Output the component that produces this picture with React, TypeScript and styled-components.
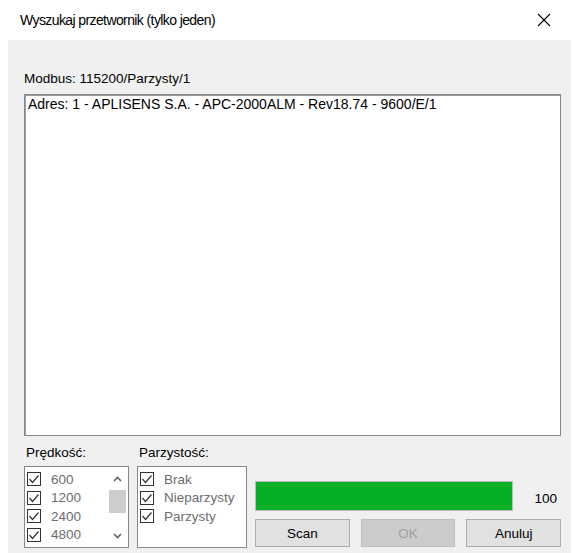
import { createGlobalStyle } from 'styled-components';
import styled from 'styled-components';

const GlobalStyle = createGlobalStyle`
  html, body {
    margin: 0;
    padding: 0;
    background: #ffffff;
  }
  body {
    font-family: 'Liberation Sans', Arial, sans-serif;
    font-size: 13px;
    color: #000000;
  }
`;

const SPEEDS = ['600', '1200', '2400', '4800'];
const PARITIES = ['Brak', 'Nieparzysty', 'Parzysty'];

export default function App() {
  return (
    <>
      <GlobalStyle />
      <Window>
        <TitleBar>
          <Title>Wyszukaj przetwornik (tylko jeden)</Title>
          <CloseButton aria-label="close">
            <svg width="14" height="14" viewBox="0 0 14 14">
              <path d="M1 1 L13 13 M13 1 L1 13" stroke="#000" strokeWidth="1.1" />
            </svg>
          </CloseButton>
        </TitleBar>

        <Body>
          <FieldLabel>Modbus: 115200/Parzysty/1</FieldLabel>
          <ResultList>
            <ResultItem>Adres: 1 - APLISENS S.A. - APC-2000ALM - Rev18.74 - 9600/E/1</ResultItem>
          </ResultList>

          <BottomRow>
            <Group $width={106}>
              <GroupLabel>Prędkość:</GroupLabel>
              <CheckList>
                <CheckItems>
                  {SPEEDS.map((s) => (
                    <CheckRow key={s}>
                      <CheckMark />
                      <span>{s}</span>
                    </CheckRow>
                  ))}
                </CheckItems>
                <ScrollBar>
                  <ScrollArrow>
                    <svg width="9" height="6" viewBox="0 0 9 6">
                      <path d="M1 5 L4.5 1.5 L8 5" fill="none" stroke="#606060" strokeWidth="1.6" />
                    </svg>
                  </ScrollArrow>
                  <ScrollTrack>
                    <ScrollThumb />
                  </ScrollTrack>
                  <ScrollArrow>
                    <svg width="9" height="6" viewBox="0 0 9 6">
                      <path d="M1 1 L4.5 4.5 L8 1" fill="none" stroke="#606060" strokeWidth="1.6" />
                    </svg>
                  </ScrollArrow>
                </ScrollBar>
              </CheckList>
            </Group>

            <Group $width={111}>
              <GroupLabel>Parzystość:</GroupLabel>
              <CheckList>
                <CheckItems>
                  {PARITIES.map((p) => (
                    <CheckRow key={p}>
                      <CheckMark />
                      <span>{p}</span>
                    </CheckRow>
                  ))}
                </CheckItems>
              </CheckList>
            </Group>

            <Controls>
              <ProgressRow>
                <ProgressBar>
                  <ProgressFill style={{ width: '100%' }} />
                </ProgressBar>
                <ProgressValue>100</ProgressValue>
              </ProgressRow>
              <ButtonRow>
                <Button>Scan</Button>
                <Button disabled>OK</Button>
                <Button>Anuluj</Button>
              </ButtonRow>
            </Controls>
          </BottomRow>
        </Body>
      </Window>
    </>
  );
}

function CheckMark() {
  return (
    <Box>
      <svg width="12" height="12" viewBox="0 0 12 12">
        <path d="M1.5 6 L4.5 9.5 L10.5 2.5" fill="none" stroke="#333" strokeWidth="1.2" />
      </svg>
    </Box>
  );
}

const Window = styled.div`
  width: 573px;
  height: 553px;
  display: flex;
  flex-direction: column;
  background: #ffffff;
  overflow: hidden;
`;

const TitleBar = styled.div`
  height: 40px;
  flex: none;
  display: flex;
  align-items: center;
  justify-content: space-between;
  padding: 0 20px 0 20px;
  box-sizing: border-box;
`;

const Title = styled.div`
  font-size: 14px;
  letter-spacing: -0.6px;
  color: #000;
  margin-top: -1px;
`;

const CloseButton = styled.div`
  width: 14px;
  height: 14px;
  display: flex;
  margin-right: 2px;
`;

const Body = styled.div`
  flex: 1;
  margin: 0 2px 0 8px;
  background: #f0f0f0;
  padding: 31px 10px 0 16px;
  display: flex;
  flex-direction: column;
`;

const FieldLabel = styled.div`
  height: 23px;
  line-height: 16px;
  font-size: 13.5px;
`;

const ResultList = styled.div`
  height: 342px;
  flex: none;
  box-sizing: border-box;
  background: #ffffff;
  border: 1px solid #828790;
  box-shadow: inset 1px 1px 0 #a0a0a0;
  padding: 1px 3px;
`;

const ResultItem = styled.div`
  font-size: 14px;
  line-height: 17px;
  white-space: nowrap;
`;

const BottomRow = styled.div`
  display: flex;
  gap: 8px;
  margin-top: 9px;
`;

const Group = styled.div<{ $width: number }>`
  width: ${({ $width }) => $width}px;
  display: flex;
  flex-direction: column;
`;

const GroupLabel = styled.div`
  height: 21px;
  line-height: 16px;
  padding-left: 2px;
  font-size: 13.5px;
`;

const CheckList = styled.div`
  height: 82px;
  box-sizing: border-box;
  background: #ffffff;
  border: 1px solid #828790;
  display: flex;
`;

const CheckItems = styled.div`
  flex: 1;
  padding: 3px 0 0 2px;
`;

const CheckRow = styled.div`
  height: 18.5px;
  display: flex;
  align-items: center;
  gap: 10px;
  color: #6d6d6d;
  font-size: 13.5px;
`;

const Box = styled.div`
  width: 14px;
  height: 14px;
  flex: none;
  box-sizing: border-box;
  border: 1px solid #333333;
  display: flex;
  align-items: center;
  justify-content: center;
  background: #ffffff;
`;

const ScrollBar = styled.div`
  width: 17px;
  margin: 0 2px 0 0;
  display: flex;
  flex-direction: column;
`;

const ScrollArrow = styled.div`
  height: 17px;
  display: flex;
  align-items: center;
  justify-content: center;
  margin: 3px 0;
`;

const ScrollTrack = styled.div`
  flex: 1;
  display: flex;
  flex-direction: column;
`;

const ScrollThumb = styled.div`
  height: 23px;
  background: #cdcdcd;
`;

const Controls = styled.div`
  width: 306px;
  display: flex;
  flex-direction: column;
  padding-top: 36px;
`;

const ProgressRow = styled.div`
  display: flex;
  align-items: flex-end;
`;

const ProgressBar = styled.div`
  width: 258px;
  height: 30px;
  box-sizing: border-box;
  border: 1px solid #bcbcbc;
  background: #e6e6e6;
  display: flex;
`;

const ProgressFill = styled.div`
  height: 100%;
  background: #06b025;
`;

const ProgressValue = styled.div`
  flex: 1;
  text-align: right;
  padding-right: 4px;
  line-height: 16px;
  margin-bottom: 4px;
  font-size: 13.5px;
`;

const ButtonRow = styled.div`
  display: flex;
  gap: 11px;
  margin-top: 8px;
`;

const Button = styled.button`
  width: 95px;
  height: 28px;
  box-sizing: border-box;
  border: 1px solid #adadad;
  background: #e1e1e1;
  font-family: 'Liberation Sans', Arial, sans-serif;
  font-size: 13.5px;
  color: #000;
  padding: 0;

  &:disabled {
    background: #cccccc;
    border-color: #bfbfbf;
    color: #a0a0a0;
  }
`;
